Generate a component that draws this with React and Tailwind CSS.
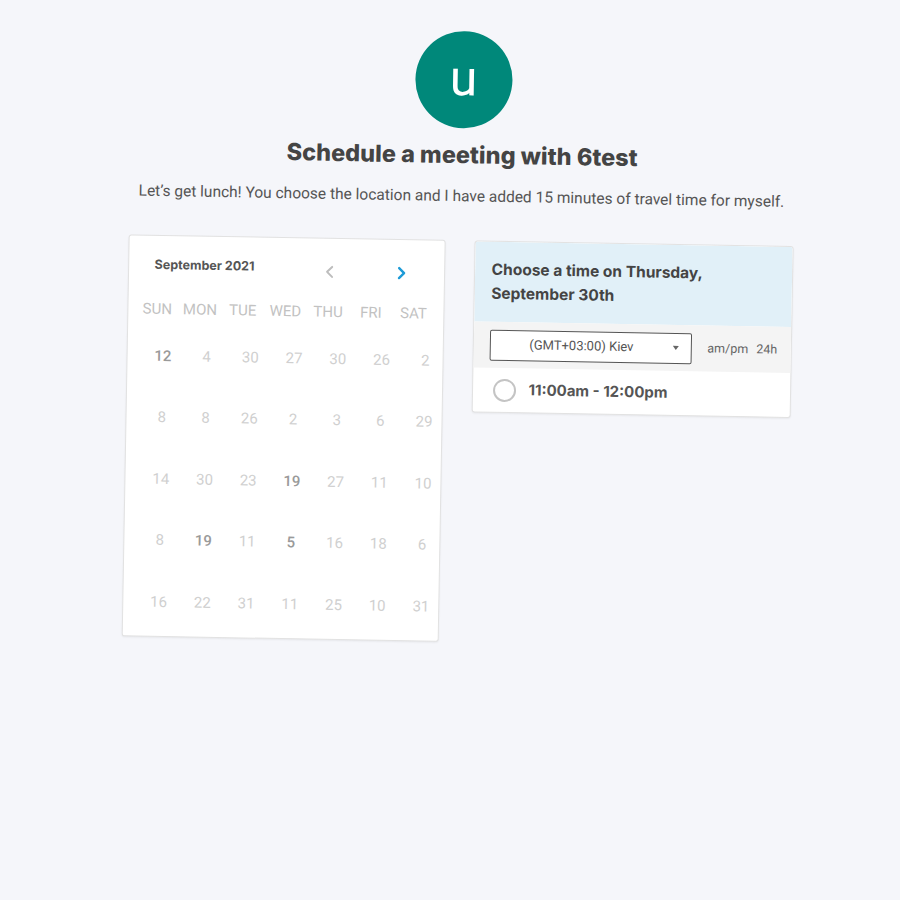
import React from 'react';

const weekdays = ['Sun', 'Mon', 'Tue', 'Wed', 'Thu', 'Fri', 'Sat'];

// [day, highlighted]
const weeks = [
  [[12, true], [4], [30], [27], [30], [26], [2]],
  [[8], [8], [26], [2], [3], [6], [29]],
  [[14], [30], [23], [19, true], [27], [11], [10]],
  [[8], [19, true], [11], [5, true], [16], [18], [6]],
  [[16], [22], [31], [11], [25], [10], [31]],
];

const ChevronLeft = ({ className }) => (
  <svg viewBox="0 0 16 16" className={className} fill="none" stroke="currentColor" strokeWidth="2" strokeLinecap="round" strokeLinejoin="round">
    <path d="M10 3 L5 8 L10 13" />
  </svg>
);

const ChevronRight = ({ className }) => (
  <svg viewBox="0 0 16 16" className={className} fill="none" stroke="currentColor" strokeWidth="2.4" strokeLinecap="round" strokeLinejoin="round">
    <path d="M6 3 L11 8 L6 13" />
  </svg>
);

const Calendar = () => (
  <div className="w-[317px] h-[402px] shrink-0 bg-white border border-[#e2e2e2] rounded-[3px] shadow-[0_1px_2px_rgba(0,0,0,0.06)] px-2 font-['Roboto',sans-serif]">
    <div className="h-[58px] flex items-start pt-[21px] pl-[18px]">
      <span className="font-['Inter',sans-serif] font-bold text-[12.5px] leading-4 text-[#555]">September 2021</span>
      <div className="ml-auto mr-[27px] mt-1 flex gap-[55px]">
        <ChevronLeft className="w-4 h-4 text-[#bdbdbd]" />
        <ChevronRight className="w-4 h-4 text-[#1e9bd7]" />
      </div>
    </div>
    <div className="grid grid-cols-7 h-[31px] items-center">
      {weekdays.map(d => (
        <div key={d} className="text-center uppercase text-[15px] text-[#c2c2c2]">{d}</div>
      ))}
    </div>
    <div className="ml-[6px] w-[306px]">
      {weeks.map((week, i) => (
        <div key={i} className="grid grid-cols-7 h-[61.5px] items-center">
          {week.map(([day, active], j) => (
            <div
              key={j}
              className={active ? 'text-center text-[15px] font-medium text-[#9a9a9a]' : 'text-center text-[15px] text-[#d0d0d0]'}
            >
              {day}
            </div>
          ))}
        </div>
      ))}
    </div>
  </div>
);

const TimePicker = () => (
  <div className="w-[319px] shrink-0 bg-white border border-[#e2e2e2] rounded-[3px] shadow-[0_1px_2px_rgba(0,0,0,0.06)] overflow-hidden">
    <div className="h-[80px] bg-[#e1f0f8] px-[17px] pt-[16px]">
      <h3 className="font-['Inter',sans-serif] font-bold text-[15.5px] leading-6 text-[#444]">
        Choose a time on Thursday,<br />September 30th
      </h3>
    </div>
    <div className="h-[46px] bg-[#f4f4f4] flex items-center pl-[16px] font-['Roboto',sans-serif]">
      <div className="w-[202px] h-[31px] bg-white border border-[#555] rounded-[2px] flex items-center pl-[39px] pr-3">
        <span className="text-[13px] text-[#555]">(GMT+03:00) Kiev</span>
        <span className="ml-auto w-0 h-0 border-l-[3px] border-r-[3px] border-t-[4px] border-l-transparent border-r-transparent border-t-[#666]" />
      </div>
      <div className="ml-[16px] flex gap-2 text-[12.5px] text-[#666]">
        <span>am/pm</span>
        <span>24h</span>
      </div>
    </div>
    <div className="h-[44px] flex items-center pl-[20px]">
      <span className="w-[23px] h-[23px] rounded-full border-2 border-[#c4c4c4]" />
      <span className="ml-[13px] font-['Inter',sans-serif] font-bold text-[15px] text-[#555]">11:00am - 12:00pm</span>
    </div>
  </div>
);

export default function App() {
  return (
    <div className="w-[900px] h-[900px] bg-[#f5f6fa] overflow-hidden">
      <div className="w-[900px] h-[900px] rotate-1 flex flex-col items-center pl-[14px] pt-[31px]">
        <div className="w-[97px] h-[97px] rounded-full bg-[#00887a] flex items-center justify-center">
          <span className="font-['Roboto',sans-serif] text-white text-[50px] leading-none -mt-1">u</span>
        </div>
        <h1 className="mt-[11px] font-['Inter',sans-serif] font-extrabold text-[23.5px] leading-8 text-[#444]">
          Schedule a meeting with 6test
        </h1>
        <p className="mt-[13px] font-['Roboto',sans-serif] text-[15.5px] leading-6 text-[#555]">
          Let’s get lunch! You choose the location and I have added 15 minutes of travel time for myself.
        </p>
        <div className="mt-[32px] flex items-start gap-[29px]">
          <Calendar />
          <TimePicker />
        </div>
      </div>
    </div>
  );
}
